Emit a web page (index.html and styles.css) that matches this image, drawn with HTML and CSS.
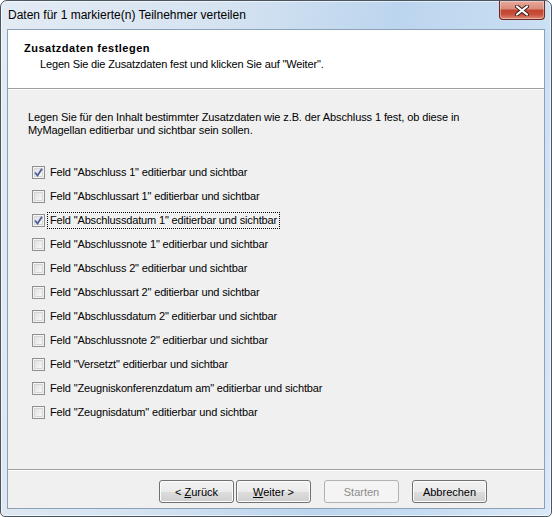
FILE: index.html
```html
<!DOCTYPE html>
<html lang="de">
<head>
<meta charset="utf-8">
<title>Daten für 1 markierte(n) Teilnehmer verteilen</title>
<link rel="stylesheet" href="styles.css">
</head>
<body>
<div class="window">
  <div class="titlebar">
    <span class="title">Daten für 1 markierte(n) Teilnehmer verteilen</span>
    <button class="close" aria-label="Schließen">
      <svg width="14" height="11" viewBox="0 0 14 11"><path d="M2 1.5 L12 9.5 M12 1.5 L2 9.5" stroke="#3b1f1c" stroke-width="4" stroke-linecap="round"/><path d="M2 1.5 L12 9.5 M12 1.5 L2 9.5" stroke="#ffffff" stroke-width="2.2" stroke-linecap="round"/></svg>
    </button>
  </div>
  <div class="client">
    <div class="header">
      <div class="h-title">Zusatzdaten festlegen</div>
      <div class="h-sub">Legen Sie die Zusatzdaten fest und klicken Sie auf "Weiter".</div>
    </div>
    <div class="content">
      <p class="intro">Legen Sie für den Inhalt bestimmter Zusatzdaten wie z.B. der Abschluss 1 fest, ob diese in<br>MyMagellan editierbar und sichtbar sein sollen.</p>
      <ul class="list">
        <li class="row"><span class="cb checked"><svg viewBox="0 0 9 9"><path d="M1 4.5 L3.5 7.5 L8 0.8" fill="none" stroke="#4a5f97" stroke-width="1.8"/></svg></span><span class="lbl">Feld "Abschluss 1" editierbar und sichtbar</span></li>
        <li class="row"><span class="cb"></span><span class="lbl">Feld "Abschlussart 1" editierbar und sichtbar</span></li>
        <li class="row"><span class="cb checked"><svg viewBox="0 0 9 9"><path d="M1 4.5 L3.5 7.5 L8 0.8" fill="none" stroke="#4a5f97" stroke-width="1.8"/></svg></span><span class="lbl focus">Feld "Abschlussdatum 1" editierbar und sichtbar</span></li>
        <li class="row"><span class="cb"></span><span class="lbl">Feld "Abschlussnote 1" editierbar und sichtbar</span></li>
        <li class="row"><span class="cb"></span><span class="lbl">Feld "Abschluss 2" editierbar und sichtbar</span></li>
        <li class="row"><span class="cb"></span><span class="lbl">Feld "Abschlussart 2" editierbar und sichtbar</span></li>
        <li class="row"><span class="cb"></span><span class="lbl">Feld "Abschlussdatum 2" editierbar und sichtbar</span></li>
        <li class="row"><span class="cb"></span><span class="lbl">Feld "Abschlussnote 2" editierbar und sichtbar</span></li>
        <li class="row"><span class="cb"></span><span class="lbl">Feld "Versetzt" editierbar und sichtbar</span></li>
        <li class="row"><span class="cb"></span><span class="lbl">Feld "Zeugniskonferenzdatum am" editierbar und sichtbar</span></li>
        <li class="row"><span class="cb"></span><span class="lbl">Feld "Zeugnisdatum" editierbar und sichtbar</span></li>
      </ul>
    </div>
    <div class="footer">
      <button class="btn">&lt; <u>Z</u>urück</button>
      <button class="btn btn-next"><u>W</u>eiter &gt;</button>
      <button class="btn btn-gap" disabled>Starten</button>
      <button class="btn btn-gap">Abbrechen</button>
    </div>
  </div>
</div>
</body>
</html>
```
FILE: styles.css
```css
* { box-sizing: border-box; }
html, body { margin: 0; padding: 0; }
body {
  width: 552px;
  height: 517px;
  font-family: "Liberation Sans", Arial, sans-serif;
  font-size: 11px;
  color: #000;
  background: #fff;
}
.window {
  width: 552px;
  height: 517px;
  border: 1px solid #4b5560;
  border-radius: 7px 7px 5px 5px;
  background: linear-gradient(100deg, #e3ebf4 0%, #d5e3f1 35%, #bcd5ee 62%, #c6dcf2 80%, #dbe9f7 100%);
  display: flex;
  flex-direction: column;
  overflow: hidden;
  box-shadow: inset 0 0 0 1px rgba(255,255,255,0.6);
}
.titlebar {
  height: 28px;
  display: flex;
  align-items: flex-start;
  flex: none;
}
.title {
  font-family: "Liberation Sans", sans-serif;
  font-size: 12px;
  margin: 7px 0 0 7px;
  color: #000;
}
.close {
  margin: 0 6px 0 auto;
  width: 46px;
  height: 19px;
  padding: 0;
  border: 1px solid #6b2a24;
  border-top: none;
  border-radius: 0 0 4px 4px;
  background: linear-gradient(#e7a99c 0%, #d88a79 45%, #c2432e 50%, #c9503b 75%, #dd8c75 100%);
  box-shadow: inset 0 0 0 1px rgba(255,255,255,0.35);
  display: flex;
  align-items: center;
  justify-content: center;
}
.client {
  flex: 1;
  margin: 0 6px 7px 6px;
  border: 1px solid #8ba1b8;
  background: #f0f0f0;
  display: flex;
  flex-direction: column;
}
.header {
  height: 59px;
  flex: none;
  background: #fff;
  border-bottom: 1px solid #a0a0a0;
  box-shadow: 0 1px 0 #fff;
  padding: 12px 0 0 16px;
}
.h-title {
  font-weight: bold;
  line-height: 13px;
  letter-spacing: 0.5px;
}
.h-sub {
  margin: 3px 0 0 16px;
  line-height: 13px;
  letter-spacing: -0.15px;
}
.content {
  flex: 1;
  padding: 22px 0 0 20px;
}
.intro {
  margin: 0;
  line-height: 13px;
  letter-spacing: -0.1px;
}
.list {
  list-style: none;
  margin: 23px 0 0 0;
  padding: 0 0 0 4px;
}
.row {
  height: 24px;
  display: flex;
  align-items: center;
}
.cb {
  width: 13px;
  height: 13px;
  border: 1px solid #8e8f8f;
  background: linear-gradient(135deg, #dcdcdc 0%, #f0f0f0 60%, #fbfbfb 100%);
  box-shadow: inset 0 0 0 1px #f4f4f4, inset 0 0 0 2px #d6d6d6;
  display: flex;
  align-items: center;
  justify-content: center;
  flex: none;
}
.cb svg { width: 9px; height: 9px; display: block; }
.lbl {
  margin-left: 2px;
  padding: 1px 2px;
  border: 1px dotted transparent;
  line-height: 13px;
  letter-spacing: -0.15px;
}
.lbl.focus { border-color: #000; }
.footer {
  height: 39px;
  flex: none;
  border-top: 1px solid #a0a0a0;
  box-shadow: inset 0 1px 0 #fff;
  display: flex;
  align-items: flex-start;
  padding: 10px 0 0 151px;
}
.btn {
  width: 75px;
  height: 23px;
  padding: 0;
  font-family: "Liberation Sans", Arial, sans-serif;
  font-size: 11px;
  color: #000;
  border: 1px solid #707070;
  border-radius: 3px;
  background: linear-gradient(#f2f2f2 0%, #ebebeb 50%, #dddddd 51%, #cfcfcf 100%);
  box-shadow: inset 0 0 0 1px #fcfcfc;
}
.btn-next { margin-left: 2px; }
.btn-gap { margin-left: 13px; }
.btn:disabled {
  color: #8d8d8d;
  border-color: #adb2b5;
  background: #f4f4f4;
  box-shadow: none;
}
```
